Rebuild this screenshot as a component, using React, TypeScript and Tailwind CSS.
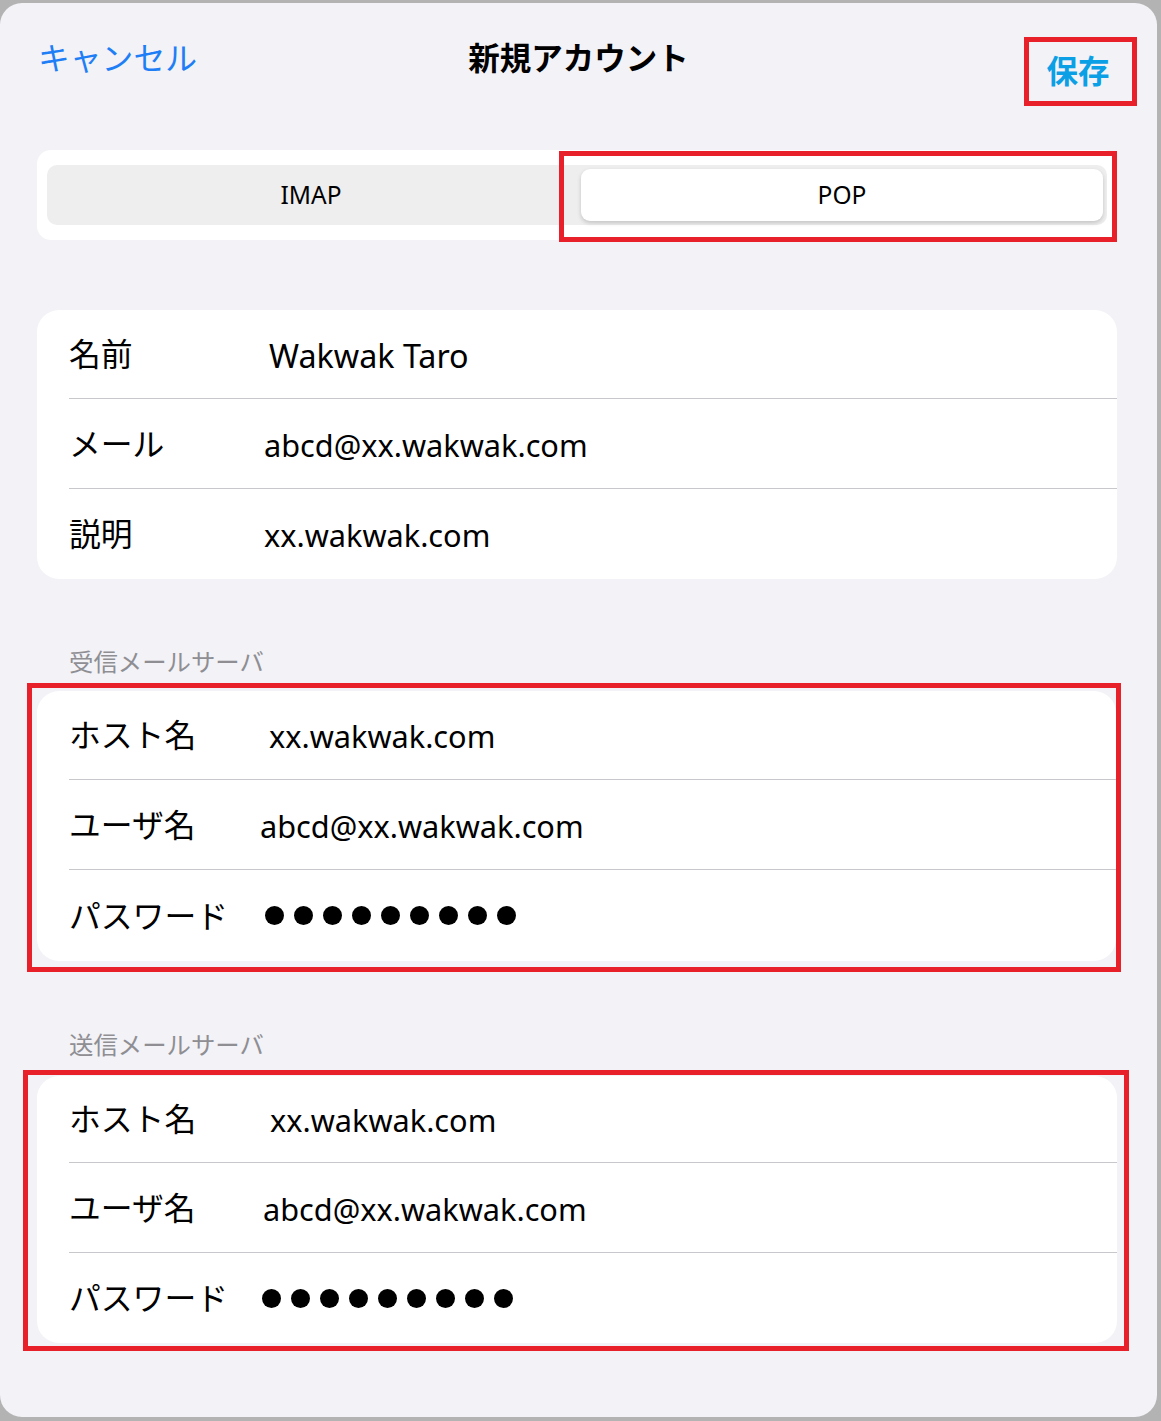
import React from 'react'

interface IRow {
  label: string
  value?: string
  valueClass?: string
  dots?: boolean
  h: string
}

const font = "font-['Noto_Sans','Noto_Sans_CJK_JP',sans-serif]"

function Dots({ offset }: { offset: string }) {
  return (
    <div className={`flex gap-[10px] ${offset}`}>
      {Array.from({ length: 9 }).map((_, i) => (
        <span key={i} className="block w-[19px] h-[19px] rounded-full bg-black" />
      ))}
    </div>
  )
}

function Card({ rows }: { rows: IRow[] }) {
  return (
    <div className="bg-white rounded-[22px] pl-[32px] overflow-hidden">
      {rows.map((row, i) => (
        <div
          key={i}
          className={`flex items-center ${row.h} ${i < rows.length - 1 ? 'border-b border-[#c8c8cc]' : ''}`}
        >
          <div className="w-[195px] shrink-0 text-[31.8px] text-black leading-none">{row.label}</div>
          {row.dots ? (
            <Dots offset={row.valueClass ?? ''} />
          ) : (
            <div className={`text-black leading-none pt-[3px] ${row.valueClass ?? ''}`}>{row.value}</div>
          )}
        </div>
      ))}
    </div>
  )
}

export default function App() {
  const account: IRow[] = [
    { label: '名前', value: 'Wakwak Taro', valueClass: 'ml-[5px] text-[32.3px]', h: 'h-[89px]' },
    { label: 'メール', value: 'abcd@xx.wakwak.com', valueClass: 'text-[30.7px]', h: 'h-[90px]' },
    { label: '説明', value: 'xx.wakwak.com', valueClass: 'text-[30.7px]', h: 'h-[90px]' },
  ]
  const incoming: IRow[] = [
    { label: 'ホスト名', value: 'xx.wakwak.com', valueClass: 'ml-[5px] text-[30.7px]', h: 'h-[89px]' },
    { label: 'ユーザ名', value: 'abcd@xx.wakwak.com', valueClass: '-ml-[4px] text-[30.7px]', h: 'h-[90px]' },
    { label: 'パスワード', dots: true, valueClass: 'ml-[1px]', h: 'h-[91px]' },
  ]
  const outgoing: IRow[] = [
    { label: 'ホスト名', value: 'xx.wakwak.com', valueClass: 'ml-[6px] text-[30.7px]', h: 'h-[87px]' },
    { label: 'ユーザ名', value: 'abcd@xx.wakwak.com', valueClass: '-ml-[1px] text-[30.7px]', h: 'h-[90px]' },
    { label: 'パスワード', dots: true, valueClass: '-ml-[2px]', h: 'h-[90px]' },
  ]

  return (
    <div className={`w-full h-[1421px] bg-[#b3b3b3] pt-[3px] pr-[4px] ${font}`}>
      <div className="h-[1414px] bg-[#f2f2f7] rounded-[22px] overflow-hidden">
        {/* ヘッダー */}
        <div className="mt-[34px] h-[69px] grid grid-cols-[1fr_auto_1fr] items-start">
          <div className="pl-[38px] pt-[2px] text-[31.8px] leading-[37px] text-[#1e7ef6]">キャンセル</div>
          <div className="pt-[2px] text-[31.5px] leading-[37px] font-bold text-black">新規アカウント</div>
          <div className="flex justify-end pr-[20px]">
            <div className="w-[113px] h-[69px] border-[5px] border-[#e8202a] flex items-center justify-center pb-[1px] pr-[5px]">
              <span className="text-[31.5px] leading-none font-bold text-[#0b9fe6]">保存</span>
            </div>
          </div>
        </div>

        {/* IMAP / POP */}
        <div className="relative mt-[44px] ml-[37px] w-[1080px] h-[90px] bg-white rounded-[14px] px-[10px] py-[15px]">
          <div className="h-[60px] w-[1060px] bg-[#eeeeef] rounded-[10px] flex items-center">
            <div className="w-[528px] text-center text-[24.5px] text-black">IMAP</div>
            <div className="ml-[6px] w-[522px] h-[52px] bg-white rounded-[9px] shadow-[0_2px_4px_rgba(0,0,0,0.18)] flex items-center justify-center text-[24.5px] text-black">
              POP
            </div>
          </div>
          <div className="absolute left-[522px] top-[1px] w-[558px] h-[91px] border-[5px] border-[#e8202a]" />
        </div>

        {/* アカウント情報 */}
        <div className="mt-[70px] ml-[37px] w-[1080px]">
          <Card rows={account} />
        </div>

        {/* 受信メールサーバ */}
        <div className="mt-[68px] pl-[69px] text-[24.4px] leading-[30px] text-[#8e8e93]">受信メールサーバ</div>
        <div className="mt-[6px] ml-[27px] w-[1094px] border-[5px] border-[#e8202a] pl-[5px] pt-[3px] pb-[6px]">
          <Card rows={incoming} />
        </div>

        {/* 送信メールサーバ */}
        <div className="mt-[58px] pl-[69px] text-[24.4px] leading-[30px] text-[#8e8e93]">送信メールサーバ</div>
        <div className="mt-[10px] ml-[23px] w-[1106px] border-[5px] border-[#e8202a] pl-[9px] pr-[7px] pt-[1px] pb-[3px]">
          <Card rows={outgoing} />
        </div>
      </div>
    </div>
  )
}
